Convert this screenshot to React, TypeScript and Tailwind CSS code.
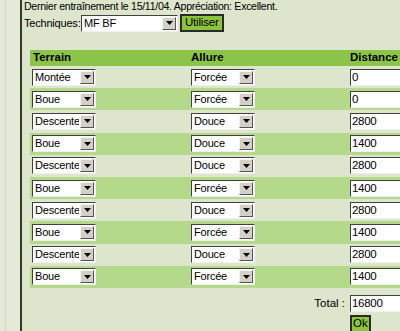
import React from "react";

const rows = [
  { terrain: "Montée", allure: "Forcée", distance: "0" },
  { terrain: "Boue", allure: "Forcée", distance: "0" },
  { terrain: "Descente", allure: "Douce", distance: "2800" },
  { terrain: "Boue", allure: "Douce", distance: "1400" },
  { terrain: "Descente", allure: "Douce", distance: "2800" },
  { terrain: "Boue", allure: "Forcée", distance: "1400" },
  { terrain: "Descente", allure: "Douce", distance: "2800" },
  { terrain: "Boue", allure: "Forcée", distance: "1400" },
  { terrain: "Descente", allure: "Douce", distance: "2800" },
  { terrain: "Boue", allure: "Forcée", distance: "1400" },
];

function FakeSelect({ value, width }: { value: string; width: string }) {
  return (
    <div
      className={`flex h-[17px] items-stretch border border-t-[#404040] border-l-[#404040] border-r-[#f0f0f0] border-b-[#f0f0f0] bg-white ${width}`}
    >
      <span className="flex-1 overflow-hidden whitespace-nowrap pl-[2px] text-[11px] leading-[15px] tracking-[-0.2px] text-black">
        {value}
      </span>
      <span className="m-[1px] flex w-[14px] shrink-0 items-center justify-center border border-t-[#f4f4f4] border-l-[#f4f4f4] border-r-[#555] border-b-[#555] bg-[#d4d0c8]">
        <svg width="7" height="4" viewBox="0 0 7 4">
          <path d="M0 0h7L3.5 4z" fill="#000" />
        </svg>
      </span>
    </div>
  );
}

function FakeInput({ value }: { value: string }) {
  return (
    <div className="h-[17px] w-[60px] border border-t-[#404040] border-l-[#404040] border-r-[#f0f0f0] border-b-[#f0f0f0] bg-white pl-[1px] text-[11.5px] leading-[15px] tracking-[-0.3px] text-black">
      {value}
    </div>
  );
}

export default function App() {
  return (
    <div
      className="flex h-[331px] w-[400px] overflow-hidden bg-[#dde5cd] text-[11px] text-black"
      style={{ fontFamily: '"Liberation Sans", Arial, sans-serif' }}
    >
      <div className="flex w-[20px] shrink-0 bg-[#e4e9d8]">
        <div className="ml-[5px] w-px bg-[#cfd6c0]" />
      </div>
      <div className="w-[2px] shrink-0 bg-[#2f3b22]" />
      <div className="min-w-0 flex-1 pl-[2px]">
        <div className="h-[14px] text-[10.6px] leading-[13px] tracking-[-0.3px]">
          Dernier entraînement le 15/11/04. Appréciation: Excellent.
        </div>
        <div className="flex h-[18px] items-center">
          <span className="w-[57px] tracking-[-0.2px]">Techniques:</span>
          <FakeSelect value="MF BF" width="w-[97px]" />
          <span className="ml-[2px] flex h-[18px] items-center border-2 border-[#2a2a2a] bg-[#8cc43e] px-[3px] text-[11.5px] leading-none tracking-[-0.2px]">
            Utiliser
          </span>
        </div>
        <div className="ml-[6px] mt-[18px] w-[420px]">
          <div className="flex h-[16px] items-center bg-[#8cc44a] text-[11.5px] font-bold">
            <span className="w-[158px] pl-[3px]">Terrain</span>
            <span className="w-[160px] pl-[3px]">Allure</span>
            <span className="pl-[2px]">Distance</span>
          </div>
          {rows.map((r, i) => (
            <div
              key={i}
              className={`flex h-[22.2px] items-center ${i % 2 === 1 ? "bg-[#b5d98a]" : "bg-[#dde5cd]"}`}
            >
              <div className="w-[158px] pl-[2px]">
                <FakeSelect value={r.terrain} width="w-[64px]" />
              </div>
              <div className="w-[160px] pl-[3px]">
                <FakeSelect value={r.allure} width="w-[64px]" />
              </div>
              <div className="pl-[2px]">
                <FakeInput value={r.distance} />
              </div>
            </div>
          ))}
          <div className="mt-[7px] flex h-[17px] items-center">
            <span className="w-[318px] pr-[3px] text-right text-[11.5px]">Total :</span>
            <div className="pl-[2px]">
              <FakeInput value="16800" />
            </div>
          </div>
          <div className="mt-[3px] flex">
            <span className="ml-[320px] flex h-[18px] items-center border-2 border-[#2a2a2a] bg-[#8cc43e] px-[1px] text-[11.5px] leading-none">
              Ok
            </span>
          </div>
        </div>
      </div>
    </div>
  );
}
